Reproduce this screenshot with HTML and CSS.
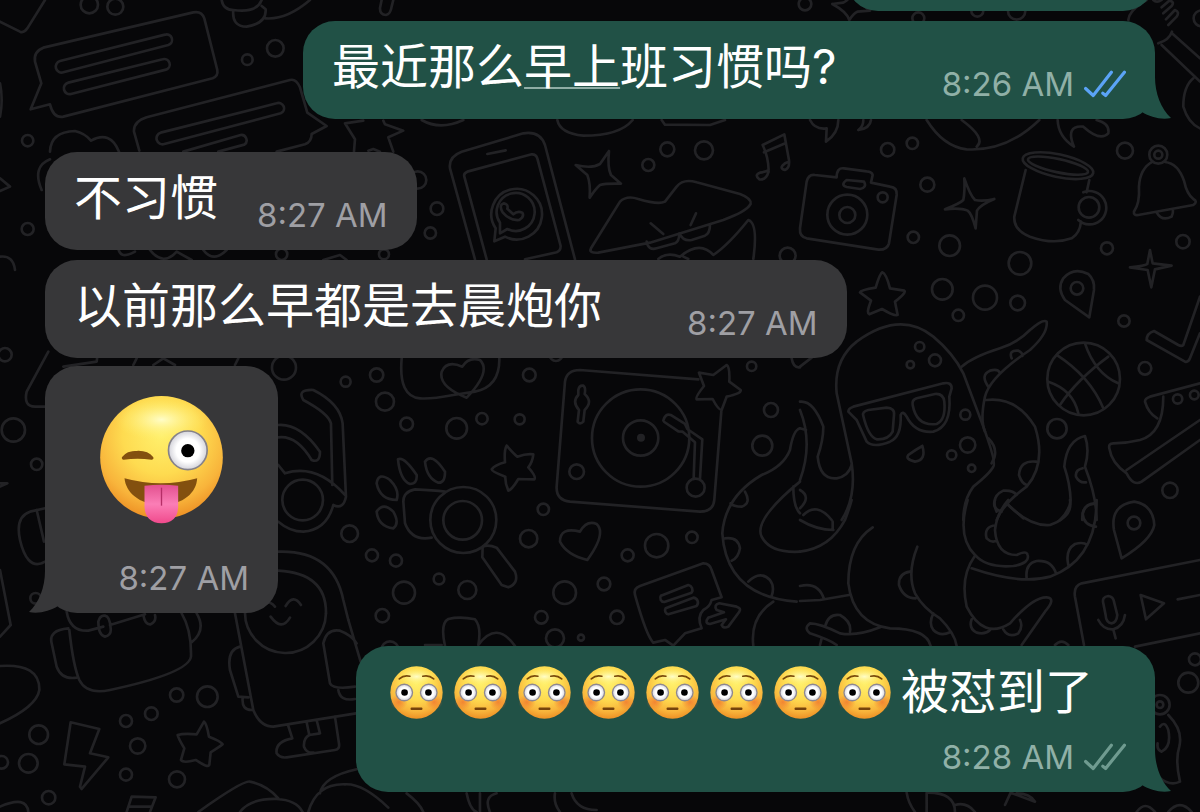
FILE: index.html
```html
<!DOCTYPE html>
<html lang="zh-CN">
<head>
<meta charset="utf-8">
<meta name="viewport" content="width=device-width, initial-scale=1">
<title>Chat</title>
<link rel="stylesheet" href="styles.css">
</head>
<body>
<svg class="wallpaper" viewBox="0 0 1200 812" preserveAspectRatio="xMidYMid slice" aria-hidden="true">
  <!-- top left: speech cards, cloud -->
  <g transform="scale(.3333)">
    <path d="M0 65L60 95Q72 100 82 85L135 0M665 0Q670 30 700 30Q770 40 785 0M700 30Q695 80 740 80Q800 70 797 28L785 18M797 55Q860 60 930 0M1145 0L1140 25Q1140 45 1158 45Q1172 42 1175 20L1180 0"/>
    <circle cx="268" cy="14" r="26"/><circle cx="346" cy="20" r="24"/>
    <path d="M105 185Q100 155 130 143L580 37Q605 32 613 55L652 210Q655 228 638 235L190 350Q160 355 150 313L92 328L124 250Z"/>
    <path d="M180 183L495 104A16 16 0 0 1 505 135L190 217A17 17 0 0 1 180 183ZM205 248L488 178A16 16 0 0 1 498 209L213 282A17 17 0 0 1 205 248Z"/>
    <path d="M418 452L402 395Q400 365 440 352L870 240Q888 235 900 262L922 338L980 378L935 402Q935 425 915 433L830 455"/>
    <path d="M482 398L830 310A16 16 0 0 1 842 340L493 432A17 17 0 0 1 482 398ZM550 455L722 405A16 16 0 0 1 733 434L655 455"/>
    <circle cx="826" cy="145" r="25"/><circle cx="742" cy="179" r="16"/><circle cx="83" cy="422" r="17"/><circle cx="83" cy="687" r="18"/>
    <path d="M150 455Q152 395 225 393Q255 400 273 422Q330 390 357 455M150 478Q95 500 125 570M0 535L30 560L0 573M0 250Q10 300 0 350M0 770Q40 765 45 810"/>
    <path d="M1090 362L1035 370L1065 418L1062 455M1150 362L1155 373L1210 392L1165 412L1180 455M1105 452L1120 447L1140 455"/>
    <path d="M355 745Q360 780 405 755M450 750Q490 800 530 755L575 780M610 750Q640 790 680 750M970 780L1020 765L1040 780"/><circle cx="845" cy="763" r="17"/><circle cx="1152" cy="763" r="15"/>
  </g>
  <!-- phone, lips, notes -->
  <g transform="translate(400 120) scale(.3333)">
    <path d="M225 418L150 145Q145 110 185 95L370 40Q420 32 435 75L525 418M262 102L317 91M260 418L193 170Q190 160 202 155L395 103Q408 102 412 115L482 378Q482 392 470 397L375 418"/>
    <path d="M283 364L287 325A76 76 0 1 1 315 350ZM300 340L300 308A57 57 0 1 1 322 327Z"/>
    <path d="M312 250Q295 255 308 277Q330 303 358 300Q374 290 367 278Q352 272 340 283L322 266Q326 253 312 250"/>
    <path d="M527 135Q575 147 600 132Q610 118 627 93Q622 145 633 165L663 191Q615 190 600 195Q588 205 569 233Q572 190 562 165Z"/>
    <path d="M573 385L660 245Q680 225 715 237Q775 255 795 245L830 200Q850 175 890 187L1020 222Q1055 235 1052 252Q1040 275 970 300L750 368L595 398Q565 400 573 385M752 310L790 342M888 280L872 315M740 365Q745 392 770 385L825 370Q838 365 838 340Q850 365 875 360L915 347Q930 340 930 315"/>
    <path d="M775 417Q800 395 840 410Q900 360 940 405Q985 375 1045 300Q1075 310 1060 417M850 410L865 417"/>
    <circle cx="802" cy="88" r="21"/><circle cx="912" cy="91" r="27"/><circle cx="745" cy="135" r="18"/><circle cx="111" cy="266" r="19"/><circle cx="91" cy="339" r="17"/><circle cx="1163" cy="407" r="24"/><circle cx="53" cy="180" r="26"/>
    <path d="M1106 155Q1098 182 1078 178Q1062 165 1080 158Q1100 155 1106 150Q1105 110 1088 75L1153 43L1167 120Q1170 145 1155 150Q1135 145 1155 130L1167 125M1092 97L1156 70"/>
    <path d="M472 0Q480 40 550 47Q660 47 698 0M785 0L795 14L930 15L975 0M65 0Q120 32 190 0"/>
  </g>
  <!-- camera, mug, bell, brush -->
  <g transform="translate(800 0) scale(.3333)">
    <path d="M45 525Q25 522 20 545L0 685Q-2 710 20 715L235 749Q262 750 267 730L290 585Q292 562 270 560L213 548L218 525Q216 515 200 514L132 505Q110 502 110 532ZM140 540Q120 555 140 561L180 567Q202 562 192 545Z"/>
    <circle cx="142" cy="644" r="60"/><circle cx="142" cy="645" r="24"/><circle cx="248" cy="592" r="15"/>
    <path d="M435 628Q480 610 490 600Q495 575 493 535Q510 585 525 600Q550 605 583 597Q540 615 531 632L527 685Q515 640 503 632Q480 622 435 628"/>
    <circle cx="263" cy="449" r="20"/><circle cx="337" cy="430" r="17"/><circle cx="382" cy="554" r="21"/><circle cx="340" cy="712" r="17"/><circle cx="449" cy="737" r="31"/><circle cx="660" cy="790" r="34"/><circle cx="921" cy="745" r="18"/><circle cx="975" cy="452" r="24"/><circle cx="1149" cy="725" r="20"/><circle cx="15" cy="12" r="19"/><circle cx="355" cy="55" r="18"/><circle cx="532" cy="32" r="18"/><circle cx="650" cy="33" r="26"/><circle cx="1205" cy="55" r="24"/>
    <ellipse cx="774" cy="497" rx="108" ry="34" transform="rotate(12 774 497)"/><ellipse cx="774" cy="497" rx="92" ry="20" transform="rotate(12 774 497)"/>
    <path d="M677 510L643 650Q640 690 690 710Q760 735 815 715Q840 700 843 665M868 540L860 577M850 577A50 50 0 1 1 835 660"/><circle cx="867" cy="622" r="31"/>
    <circle cx="1075" cy="464" r="27"/><circle cx="1075" cy="464" r="12"/>
    <path d="M1058 485Q1020 505 1017 560Q1020 610 1002 635Q1000 647 1015 645L1180 615Q1195 605 1180 597Q1160 580 1153 545Q1135 490 1095 486M1070 637Q1085 665 1115 650Q1120 640 1119 628"/>
    <path d="M97 12L130 8Q145 0 145 -5M175 5L210 32L172 35Q160 40 148 60Q140 35 97 12M985 60Q988 30 1040 0M1060 0Q1070 10 1085 0M1085 22L1108 2Q1125 5 1115 18L1090 40M1098 58L1125 30Q1140 35 1130 50L1105 75M1075 130Q1108 120 1116 95M1116 100L1200 175M1085 135L1200 245M1180 235Q1150 260 1150 320Q1165 370 1200 385"/>
    <path d="M380 360Q430 440 500 448Q620 455 718 360M485 360Q560 415 530 440M30 360Q45 390 80 385L78 425Q115 400 115 360M175 390Q190 380 190 360M175 390Q210 385 213 360M773 360Q775 410 822 440Q795 375 850 380Q900 425 925 400Q930 370 890 360"/>
  </g>
  <!-- octopus in sunglasses, stars, basketball, shoe -->
  <g transform="translate(800 250) scale(.3333)">
    <path d="M247 67Q258 70 270 115L313 122Q320 128 285 155L293 195Q285 200 246 177L208 193Q198 190 213 152L180 127Q182 120 227 113Q240 70 247 67ZM990 52Q1035 48 1042 42L1050 0L1058 40L1115 47L1065 58L1054 112L1043 60Z"/>
    <circle cx="427" cy="118" r="31"/><circle cx="555" cy="143" r="36"/><circle cx="653" cy="159" r="22"/><circle cx="475" cy="196" r="17"/><circle cx="972" cy="213" r="17"/><circle cx="1035" cy="355" r="19"/><circle cx="771" cy="536" r="29"/><circle cx="1110" cy="721" r="23"/><circle cx="359" cy="290" r="14"/><circle cx="331" cy="344" r="11"/><circle cx="405" cy="331" r="18"/><circle cx="496" cy="494" r="15"/><circle cx="503" cy="585" r="23"/><circle cx="455" cy="615" r="14"/><circle cx="515" cy="655" r="11"/>
    <path d="M868 202L795 150Q770 115 790 85Q820 50 865 72Q885 90 882 120Z"/><circle cx="831" cy="115" r="19"/>
    <path d="M125 810Q170 740 155 640L110 430Q100 330 170 275Q300 180 400 260Q460 310 490 370L550 530Q590 640 580 650Q570 670 520 710Q490 750 490 810"/>
    <path d="M485 350Q520 320 600 295Q650 280 690 240Q730 205 740 215Q745 250 690 300Q570 380 555 440Q540 510 555 545M635 325Q625 300 655 302Q670 310 667 318M565 410Q540 375 570 362Q595 355 600 370M560 450Q650 440 705 530Q740 640 680 710Q610 760 590 810M708 635Q660 630 657 675Q665 700 680 705M590 785Q570 740 610 722Q640 720 650 735M625 765L670 805M565 565Q600 600 575 640"/>
    <path d="M145 485Q145 475 160 470L430 400Q455 395 455 415L448 440Q455 530 400 545Q345 550 320 500Q308 480 302 495Q305 560 270 575Q220 595 200 575L170 510ZM190 498Q185 485 205 480L260 473Q285 475 282 495L278 545Q265 570 230 568Q205 560 190 498ZM338 465Q335 450 350 445L405 432Q430 430 433 455Q438 510 410 522Q350 530 338 465Z"/>
    <path d="M367 588Q380 630 345 635Q315 628 325 615Q345 600 367 588M0 350L35 323M0 455Q40 450 70 530Q70 570 53 620Q60 690 110 685Q145 680 155 645M0 480Q40 580 0 690M0 535L18 540M0 720Q35 740 0 775M10 795Q50 755 95 810"/>
    <circle cx="851" cy="387" r="109"/>
    <path d="M770 315Q870 380 910 475M925 320Q830 390 780 465M855 280Q885 370 955 400M745 395Q820 420 835 490"/>
    <path d="M1200 140L1150 285Q1145 290 1135 285L1062 243Q1040 250 1040 270L1155 335Q1165 338 1170 325L1200 250M1200 400L1050 440Q1035 445 1035 455Q1045 490 1072 505M1090 440Q1090 550 1020 570Q980 580 940 580Q925 580 928 595Q935 640 980 670Q1000 710 1025 695L1200 570M980 660L1200 510"/><circle cx="1133" cy="447" r="14"/><circle cx="1183" cy="435" r="13"/>
    <path d="M780 810Q810 780 812 750Q810 700 793 650Q800 570 855 558Q870 600 855 650Q890 740 890 810M848 655Q825 660 828 680Q838 700 858 697M880 762Q845 765 847 810"/>
  </g>
  <!-- tentacles, voice note -->
  <g transform="translate(800 500) scale(.3333)">
    <path d="M0 155Q90 145 135 60Q150 20 155 0M0 60Q50 90 100 90M98 88L98 65M218 82Q145 130 145 250Q160 370 270 385Q380 385 392 438M352 140Q320 220 345 280Q370 325 420 355Q465 400 470 438M330 215Q295 220 297 255Q310 295 347 295M400 340Q385 370 400 390Q420 410 450 397M0 303L60 300L147 285M0 258Q55 245 72 297M240 382Q170 410 120 400Q60 370 30 370Q10 385 30 400Q90 420 110 435M75 380Q85 340 120 345Q155 365 150 395M65 415L60 435"/>
    <path d="M503 0Q470 110 525 165Q560 205 640 198Q690 190 683 165Q680 150 650 165Q590 165 585 90Q590 40 625 0M585 0Q575 25 605 35M588 75Q550 80 560 115Q575 130 590 122M625 15Q690 80 750 75Q820 50 810 0M890 0Q890 180 750 230Q660 255 515 205M523 170Q480 230 500 320Q550 420 630 370Q700 290 740 292Q770 295 735 335L665 435M515 358Q505 385 530 398Q555 405 570 390M610 388Q625 415 655 400Q670 380 660 360M680 235Q675 190 710 183Q755 180 768 220M805 195Q795 150 825 132Q850 125 862 135M888 80Q850 75 848 40Q855 12 882 10"/>
    <path d="M965 175L942 90Q930 15 1003 5Q1060 15 1063 75Q1055 120 965 175M1200 180L845 250Q820 258 825 290L852 435M1200 400L1005 440M1022 285L1092 310L1038 358ZM910 310Q905 290 925 288Q940 290 942 305L952 345Q950 368 935 370Q918 368 917 345ZM895 360Q910 390 940 388Q970 380 975 345M940 388L947 415M1133 298L1200 285M765 435Q785 415 805 435"/><circle cx="1002" cy="69" r="19"/>
    <circle cx="1165" cy="548" r="30"/><circle cx="1185" cy="478" r="18"/><circle cx="1080" cy="614" r="29"/><circle cx="1080" cy="614" r="10"/><path d="M1105 645Q1150 690 1138 740Q1125 780 1140 845Q1110 860 1075 830M1080 680Q1095 660 1105 690Q1115 740 1085 755Q1070 750 1073 730M320 878Q325 910 345 936M380 878L380 936M385 878Q465 878 465 936M465 915Q500 905 525 936M615 915L632 878L705 905Q690 880 650 880M1010 936Q1035 900 1065 936M1105 936Q1140 895 1175 936"/>
  </g>
  <!-- turntable, magnifier, paw, hearts -->
  <g transform="translate(400 350) scale(.3333)">
    <path d="M5 25Q-5 140 60 145Q90 148 160 135L225 125Q300 110 298 25M200 143Q115 110 125 65Q140 30 187 50Q205 20 240 30Q275 65 200 143ZM480 575Q480 530 540 545Q560 510 590 522Q620 550 562 630Q500 615 480 575Z"/>
    <circle cx="388" cy="75" r="19"/><circle cx="20" cy="222" r="19"/><circle cx="170" cy="235" r="31"/><circle cx="246" cy="206" r="17"/><circle cx="359" cy="208" r="15"/><circle cx="430" cy="478" r="17"/><circle cx="386" cy="566" r="26"/><circle cx="770" cy="587" r="35"/><circle cx="876" cy="562" r="17"/><circle cx="683" cy="616" r="18"/><circle cx="612" cy="702" r="19"/><circle cx="494" cy="728" r="34"/><circle cx="202" cy="720" r="27"/><circle cx="117" cy="687" r="16"/><circle cx="12" cy="728" r="33"/><circle cx="424" cy="802" r="19"/><circle cx="465" cy="865" r="27"/><circle cx="543" cy="863" r="9"/><circle cx="651" cy="802" r="20"/><circle cx="1055" cy="49" r="14"/><circle cx="1113" cy="180" r="21"/><circle cx="1087" cy="287" r="30"/><circle cx="468" cy="14" r="19"/>
    <path d="M895 88L540 60Q500 60 495 95L470 410Q468 450 510 455L900 485Q940 485 943 450L964 185M897 68L940 75L980 45Q990 50 988 95L1022 120Q1025 130 980 140L965 180Q955 180 938 147L890 148Q885 142 912 108ZM535 120Q538 105 550 107Q558 112 554 132Q580 155 554 180L550 215Q540 225 533 215L537 180Q515 155 535 135Z"/>
    <circle cx="722" cy="264" r="146"/><circle cx="722" cy="264" r="53"/><circle class="dot" cx="723" cy="263" r="12"/><circle cx="530" cy="365" r="22"/><circle cx="887" cy="413" r="27"/>
    <path d="M790 212Q795 190 812 195L855 222L862 237L907 268L900 387M881 387L885 277L848 245L835 244L793 216"/>
    <path d="M320 287Q340 310 352 320Q380 310 400 313Q398 335 385 352Q410 380 403 388Q380 388 355 387Q335 420 325 422Q315 400 316 380Q275 365 275 358Q285 345 315 337Q312 300 320 287"/>
    <circle cx="190" cy="510" r="99"/><circle cx="188" cy="511" r="58"/><path d="M248 590Q265 583 290 593L345 665Q358 700 325 712L305 705L247 622ZM135 425Q100 420 45 418Q10 425 10 455L15 520Q35 575 95 563M75 335Q95 305 135 365Q135 400 115 398Q80 385 75 335M-6 328Q12 318 50 375Q52 402 30 402Q0 390 -6 328M135 888Q120 820 145 807Q180 798 225 808Q245 830 235 885Q290 810 345 888M75 885L125 885"/>
    <path d="M905 835L855 850L820 887L795 870L760 878Q740 860 705 735Q700 715 720 708L910 640Q930 640 935 660L965 742L935 750Q930 770 910 780Q890 800 905 835M783 737L865 705A15 15 0 0 1 875 728L793 756A12 12 0 0 1 783 737M797 775L880 743A15 15 0 0 1 890 768L805 793A12 12 0 0 1 797 775M925 803L972 787L950 780Q940 765 958 760L1010 770Q1025 775 1018 785L985 830Q970 837 965 825L978 808L930 822Q912 820 925 803"/>
    <path d="M1200 235Q1180 240 1170 300Q1150 350 1085 375Q975 440 967 550Q980 740 1190 755M1200 395Q1060 510 1085 560Q1110 610 1200 605M1180 410Q1180 470 1200 490M1035 425Q1055 460 1025 470Q1000 470 992 460M975 565Q1015 560 1020 595Q1015 625 995 632M1045 695Q1080 660 1110 690Q1125 710 1115 738M1120 755Q1050 800 1060 887M1175 25Q1180 55 1200 52"/>
  </g>
  <!-- scooter, fins, penguin top -->
  <g transform="translate(0 350) scale(.3333)">
    <path d="M145 5L80 125Q70 170 105 170L135 170M190 50L290 35L292 20M400 45L410 25M460 45L490 25L525 45M705 45L715 25M835 225Q900 220 960 305Q960 340 935 330Q890 255 835 262M910 150Q890 118 940 120Q1020 160 1028 220L1038 440Q1030 480 1000 465Q980 540 910 545Q870 545 835 515M910 150Q985 190 993 220L997 405M835 345L855 370Q950 340 1035 435M835 605Q1000 600 1030 750L1045 810M835 662Q980 670 978 790"/>
    <circle cx="908" cy="450" r="61"/><circle cx="852" cy="53" r="36"/><circle cx="1037" cy="95" r="15"/><circle cx="1130" cy="75" r="20"/><circle cx="1155" cy="155" r="27"/><circle cx="1049" cy="551" r="25"/><circle cx="1116" cy="616" r="18"/><circle cx="1188" cy="632" r="18"/><circle cx="40" cy="240" r="35"/><circle cx="110" cy="343" r="17"/><circle cx="15" cy="14" r="20"/><circle cx="107" cy="745" r="16"/>
    <path d="M1130 400Q1135 365 1170 390Q1200 420 1190 450Q1140 450 1130 400M1130 485Q1150 455 1180 485Q1200 520 1180 535Q1135 530 1130 485M135 475L90 485Q45 500 60 570Q80 655 125 640L135 635M110 480L132 575M0 410L22 400L0 400M0 660L32 825"/>
  </g>
  <!-- backpack, penguin, bolt, star -->
  <g transform="translate(0 580) scale(.3333)">
    <path d="M32 135L0 170M200 95Q210 155 265 152L310 140M330 135L435 103M545 100Q575 150 573 230Q565 280 330 330Q260 345 238 300Q220 260 208 150M205 145Q145 150 155 190L170 260Q185 300 230 293M590 100Q620 150 575 187M295 125Q300 105 315 107Q330 110 332 145Q335 165 315 170Q295 165 295 125M430 105Q435 135 452 133Q470 125 465 105"/>
    <path d="M705 100L760 390Q780 440 820 440L1068 400M1045 120L1082 245M720 200Q680 210 690 270L715 350L745 352M728 355Q725 390 755 390M970 190Q980 145 1020 152Q1055 165 1070 190M970 190L990 310Q1000 330 1065 320M1015 330Q1020 365 1065 357M812 110Q845 155 870 113M790 65Q815 65 825 80M857 78Q880 40 903 75M865 438L877 475Q825 485 830 520Q840 535 860 532L1005 510Q1020 508 1017 490L1005 410M920 427L928 465Q910 475 912 500Q920 520 940 518M950 420L960 460L928 465M978 100A120 120 0 0 1 735 95"/>
    <circle cx="116" cy="464" r="28"/><circle cx="85" cy="550" r="28"/><circle cx="5" cy="547" r="19"/><circle cx="146" cy="653" r="20"/><circle cx="378" cy="423" r="18"/><circle cx="454" cy="401" r="19"/><circle cx="530" cy="345" r="20"/><circle cx="622" cy="350" r="31"/><circle cx="413" cy="498" r="23"/><circle cx="378" cy="584" r="18"/><circle cx="531" cy="598" r="24"/><circle cx="1147" cy="107" r="20"/><circle cx="1170" cy="210" r="26"/>
    <path d="M212 427L298 447L270 520L325 532L245 627L240 620L255 560L193 553ZM612 425Q620 430 627 470Q665 485 668 493Q660 500 632 517L628 555Q625 565 587 540Q550 550 543 540L553 505Q535 475 533 465Q550 460 590 463ZM0 258Q120 250 118 330Q110 380 0 430M380 696L395 650L467 652L450 696M388 680L455 680M0 680Q80 645 85 696M595 696Q730 600 750 605Q800 615 835 655M720 696Q750 655 830 657Q890 660 908 696M925 696Q950 610 1035 613Q1090 610 1165 683M960 640Q970 590 1070 568M1220 640Q1260 670 1270 696M1400 640Q1410 690 1430 696M1440 640L1440 696M1490 640Q1450 650 1470 696M1665 640Q1660 670 1680 696M1715 640Q1730 690 1790 690"/>
  </g>
</svg>

<svg class="symbols" aria-hidden="true">
  <defs>
    <radialGradient id="face" cx=".5" cy=".32" r=".7">
      <stop offset="0" stop-color="#fff06c"/><stop offset=".45" stop-color="#fedb50"/><stop offset=".78" stop-color="#f8b43b"/><stop offset="1" stop-color="#ec8c22"/>
    </radialGradient>
    <radialGradient id="shine">
      <stop offset="0" stop-color="#fffdc8"/><stop offset="1" stop-color="#fff06c" stop-opacity="0"/>
    </radialGradient>
    <radialGradient id="blush"><stop offset="0" stop-color="#ef6d2c" stop-opacity=".7"/><stop offset="1" stop-color="#ef6d2c" stop-opacity="0"/></radialGradient>
    <radialGradient id="eye"><stop offset=".6" stop-color="#fff"/><stop offset="1" stop-color="#d3d3da"/></radialGradient>
    <linearGradient id="tongue" x1="0" y1="0" x2="0" y2="1"><stop offset="0" stop-color="#e2508f"/><stop offset=".5" stop-color="#fb7eb6"/><stop offset="1" stop-color="#f04a8c"/></linearGradient>
    <symbol id="flushed" viewBox="0 0 160 160">
      <circle cx="80" cy="80" r="79" fill="url(#face)"/>
      <ellipse cx="80" cy="32" rx="58" ry="26" fill="url(#shine)"/>
      <ellipse cx="27" cy="109" rx="26" ry="24" fill="url(#blush)"/><ellipse cx="133" cy="109" rx="26" ry="24" fill="url(#blush)"/>
      <g fill="url(#eye)" stroke="#8d8791" stroke-width="4"><circle cx="43" cy="80" r="25"/><circle cx="117" cy="80" r="25"/></g>
      <circle cx="44" cy="80" r="10"/><circle cx="116" cy="80" r="10"/>
      <path d="M28 39Q42 26 60 31M99 31Q117 26 132 39" fill="none" stroke="#7a4a0c" stroke-width="5" stroke-linecap="round"/>
      <rect x="62" y="125" width="36" height="8" rx="3" fill="#75430c"/>
    </symbol>
    <symbol id="ticks" viewBox="0 0 132 84">
      <path d="M5 56L29 78L86 5M59 71L68 78L127 5" fill="none" stroke="currentColor" stroke-width="10" stroke-linecap="round" stroke-linejoin="round"/>
    </symbol>
    <symbol id="tail" viewBox="0 0 29 42">
      <path d="M0 0H13C13 16 19 32 29 41C19 43 8 40 0 35Z" fill="currentColor"/>
    </symbol>
  </defs>
</svg>

<main class="chat">
  <div class="bubble sent clipped"></div>

  <article class="bubble sent wide-gap">
    <p class="text">最近那么<u class="marked">早上</u>班习惯吗?</p>
    <div class="meta"><time>8:26 AM</time><svg class="ticks read" role="img" aria-label="已读"><use href="#ticks"/></svg></div>
    <svg class="tail" aria-hidden="true"><use href="#tail"/></svg>
  </article>

  <article class="bubble received turn">
    <p class="text">不习惯</p>
    <div class="meta"><time>8:27 AM</time></div>
  </article>

  <article class="bubble received mid-gap">
    <p class="text">以前那么早都是去晨炮你</p>
    <div class="meta"><time>8:27 AM</time></div>
  </article>

  <article class="bubble received stacked sticker">
    <svg class="wink" viewBox="293 135 380 396" role="img" aria-label="😜">
      <circle cx="483" cy="325" r="184" fill="url(#face)"/>
      <ellipse cx="483" cy="212" rx="140" ry="64" fill="url(#shine)"/>
      <path d="M372 388Q481 418 590 388C588 430 550 468 481 468C415 466 376 430 372 388Z" fill="#83500f"/>
      <path d="M432 410Q483 405 533 410V475Q530 522 483 523Q435 521 432 475Z" fill="url(#tongue)"/>
      <path d="M483 416V470" stroke="#b52e67" stroke-width="4"/>
      <path d="M369 327Q380 310 411 310Q440 309 454 327Q411 322 369 327Z" fill="#83500f" stroke="#83500f" stroke-width="10" stroke-linejoin="round"/>
      <circle cx="562" cy="304" r="58" fill="url(#eye)" stroke="#85828a" stroke-width="5"/><circle cx="562" cy="305" r="20"/>
    </svg>
    <div class="meta"><time>8:27 AM</time></div>
    <svg class="tail" aria-hidden="true"><use href="#tail"/></svg>
  </article>

  <article class="bubble sent stacked turn">
    <p class="text with-emoji"><span class="emojis" role="img" aria-label="😳😳😳😳😳😳😳😳"><svg class="emoji"><use href="#flushed"/></svg><svg class="emoji"><use href="#flushed"/></svg><svg class="emoji"><use href="#flushed"/></svg><svg class="emoji"><use href="#flushed"/></svg><svg class="emoji"><use href="#flushed"/></svg><svg class="emoji"><use href="#flushed"/></svg><svg class="emoji"><use href="#flushed"/></svg><svg class="emoji"><use href="#flushed"/></svg></span>被怼到了</p>
    <div class="meta"><time>8:28 AM</time><svg class="ticks" role="img" aria-label="已送达"><use href="#ticks"/></svg></div>
    <svg class="tail" aria-hidden="true"><use href="#tail"/></svg>
  </article>
</main>
</body>
</html>
```
FILE: styles.css
```css
* { box-sizing: border-box; }

body {
  margin: 0;
  min-height: 100vh;
  overflow: hidden;
  background: #070709;
  font-family: Inter, "Noto Sans CJK SC", sans-serif;
}

.wallpaper {
  position: absolute;
  inset: 0;
  width: 100%;
  height: 100%;
  fill: none;
  stroke: #222225;
  stroke-width: 8;
  stroke-linecap: round;
  stroke-linejoin: round;
}

.wallpaper .dot { fill: #222225; stroke: none; }

.symbols { position: absolute; width: 0; height: 0; }

.chat {
  position: relative;
  display: flex;
  flex-direction: column;
  gap: 10px;
  padding: 0 45px 20px;
}

.bubble {
  position: relative;
  display: flex;
  align-items: flex-end;
  gap: 39px;
  min-height: 98px;
  padding: 17px 29px 15px;
  border-radius: 32px;
}

.sent { align-self: flex-end; background: #215146; color: #215146; }
.received { align-self: flex-start; background: #373739; color: #373739; }
.turn { margin-top: 23px; }
.mid-gap { gap: 85px; }
.wide-gap { gap: 105px; }

.clipped { width: 309px; margin-top: -87px; }

.stacked { flex-direction: column; }

.text {
  margin: 0;
  align-self: flex-start;
  color: #fff;
  font-size: 48px;
  line-height: 58px;
  white-space: nowrap;
}

.marked {
  text-decoration: underline;
  text-decoration-color: #8fada5;
  text-decoration-thickness: 2px;
  text-underline-offset: 3px;
}

.meta {
  display: flex;
  align-items: center;
  gap: 10px;
  font-size: 33px;
  line-height: 40px;
  white-space: nowrap;
}

.received .meta { color: #9f9fa4; }
.sent .meta { color: #90b0a7; }

.ticks { width: 42px; height: 28px; color: #6f9b90; }
.ticks.read { color: #5ba3f6; }

.tail {
  position: absolute;
  right: -16px;
  bottom: 0;
  width: 29px;
  height: 42px;
}

.received .tail { right: auto; left: -16px; transform: scaleX(-1); }

.sticker { width: 233px; gap: 32px; padding-top: 28px; margin-top: -2px; }
.wink { align-self: center; width: 127px; height: 132px; }

.with-emoji { display: flex; align-items: center; padding-right: 33px; }
.emojis { display: flex; gap: 11px; margin-right: 10px; padding-left: 5px; }
.emoji { width: 53px; height: 53px; }
.sent.stacked { gap: 16px; }
```
